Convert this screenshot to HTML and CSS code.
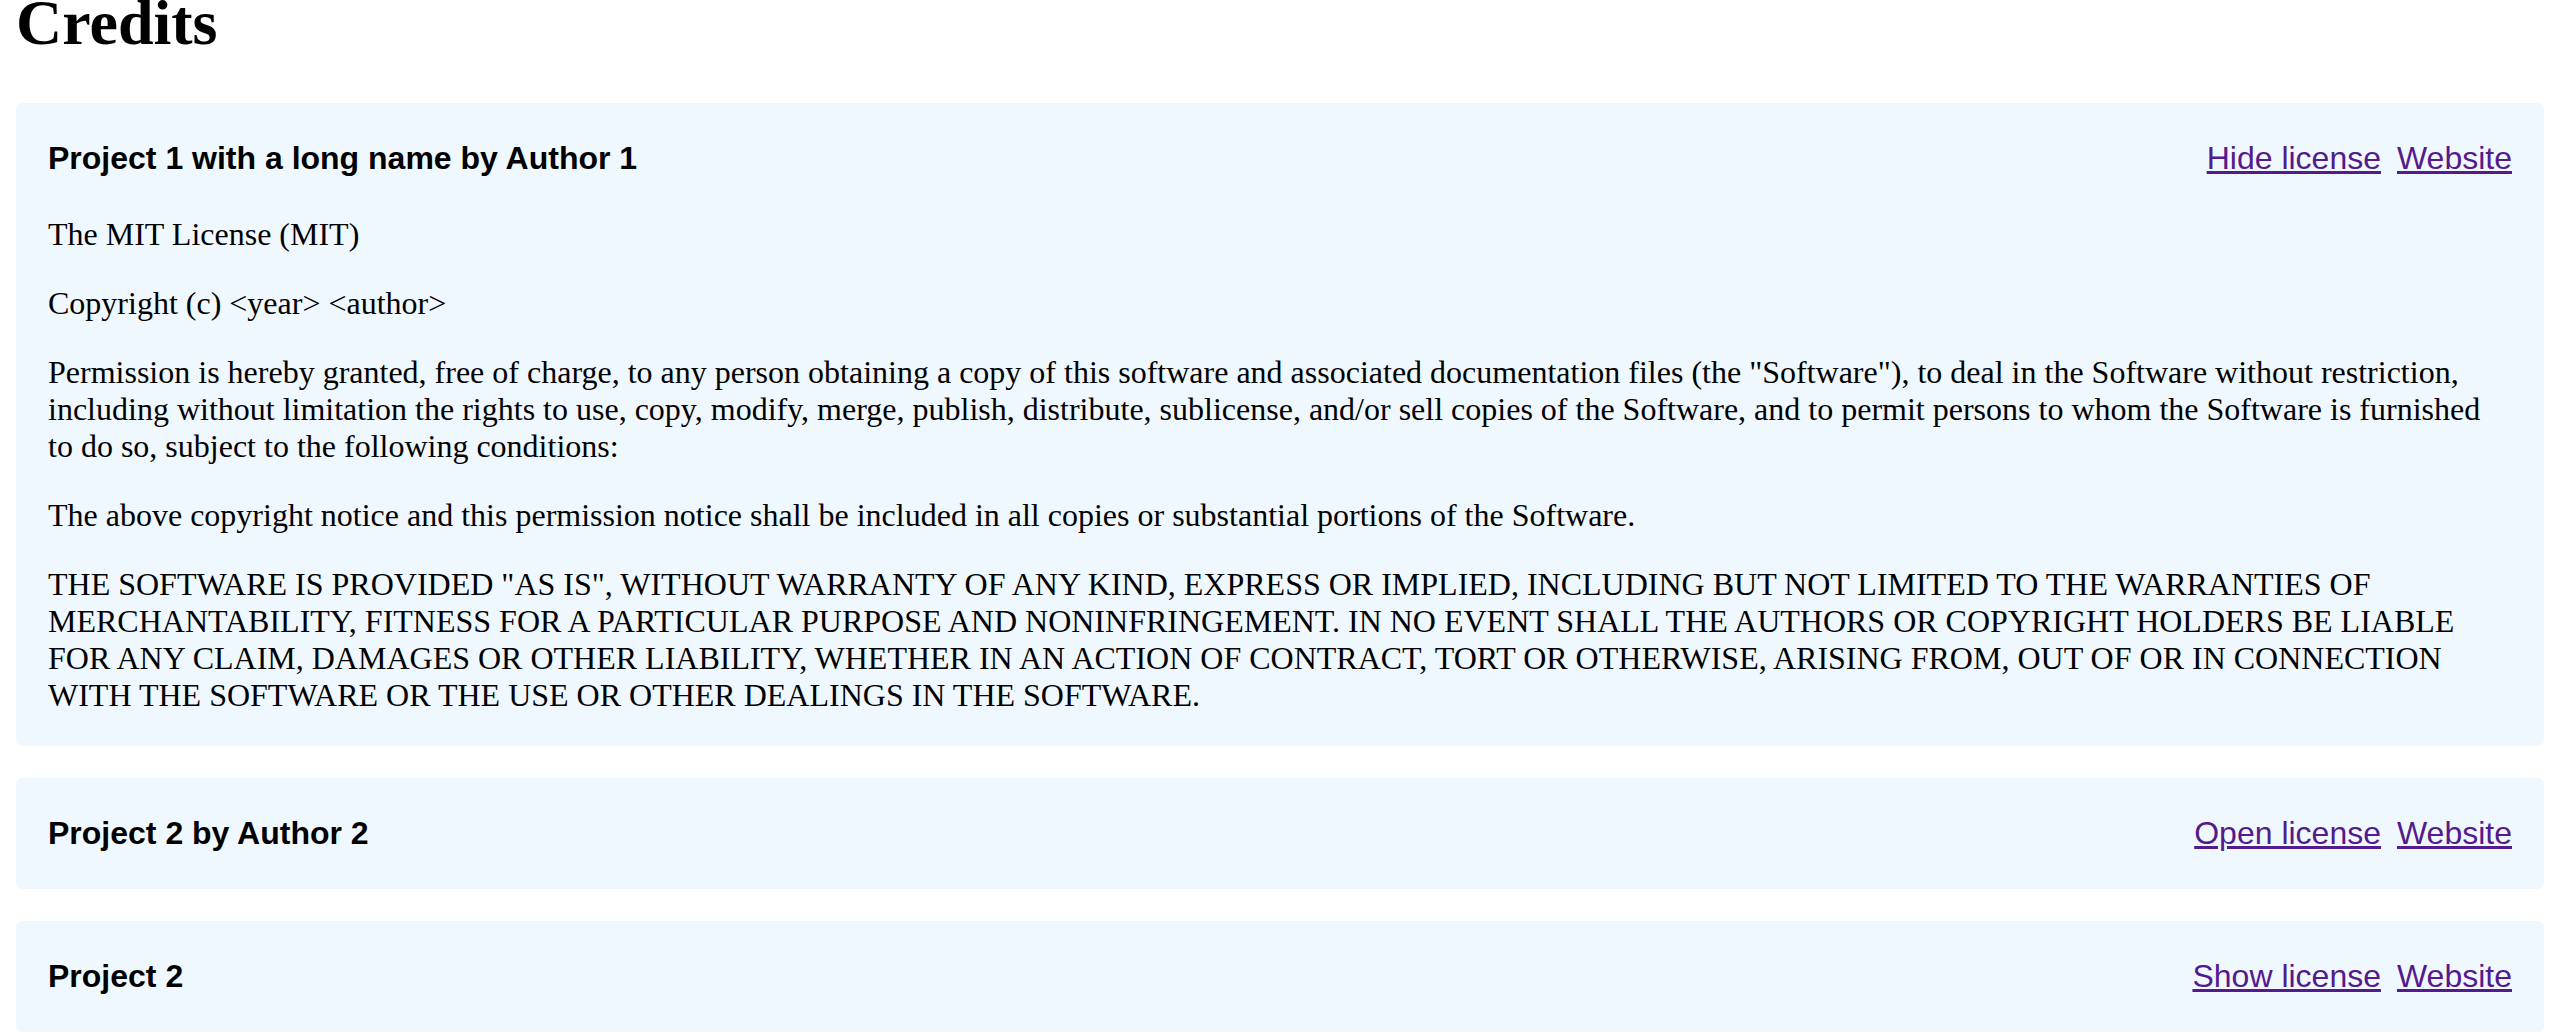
FILE: index.html
```html
<!DOCTYPE html>
<html lang="en">
<head>
<meta charset="utf-8">
<title>Credits</title>
<link rel="stylesheet" href="styles.css">
</head>
<body>
<h1 class="title">Credits</h1>
<div class="list">
  <section class="card">
    <div class="card-head">
      <span class="name">Project 1 with a long name by Author 1</span>
      <span class="links"><a class="link" href="#">Hide license</a><a class="link" href="#">Website</a></span>
    </div>
    <div class="license">
      <p>The MIT License (MIT)</p>
      <p>Copyright (c) &lt;year&gt; &lt;author&gt;</p>
      <p>Permission is hereby granted, free of charge, to any person obtaining a copy of this software and associated documentation files (the "Software"), to deal in the Software without restriction, including without limitation the rights to use, copy, modify, merge, publish, distribute, sublicense, and/or sell copies of the Software, and to permit persons to whom the Software is furnished to do so, subject to the following conditions:</p>
      <p>The above copyright notice and this permission notice shall be included in all copies or substantial portions of the Software.</p>
      <p>THE SOFTWARE IS PROVIDED "AS IS", WITHOUT WARRANTY OF ANY KIND, EXPRESS OR IMPLIED, INCLUDING BUT NOT LIMITED TO THE WARRANTIES OF MERCHANTABILITY, FITNESS FOR A PARTICULAR PURPOSE AND NONINFRINGEMENT. IN NO EVENT SHALL THE AUTHORS OR COPYRIGHT HOLDERS BE LIABLE FOR ANY CLAIM, DAMAGES OR OTHER LIABILITY, WHETHER IN AN ACTION OF CONTRACT, TORT OR OTHERWISE, ARISING FROM, OUT OF OR IN CONNECTION WITH THE SOFTWARE OR THE USE OR OTHER DEALINGS IN THE SOFTWARE.</p>
    </div>
  </section>
  <section class="card">
    <div class="card-head">
      <span class="name">Project 2 by Author 2</span>
      <span class="links"><a class="link" href="#">Open license</a><a class="link" href="#">Website</a></span>
    </div>
  </section>
  <section class="card">
    <div class="card-head">
      <span class="name">Project 2</span>
      <span class="links"><a class="link" href="#">Show license</a><a class="link" href="#">Website</a></span>
    </div>
  </section>
</div>
</body>
</html>
```
FILE: styles.css
```css
html, body {
  overflow: hidden;
}
body {
  margin: 0 16px;
  font-family: "Liberation Serif", "Times New Roman", serif;
  font-size: 32px;
  color: #000;
  background: #fff;
}
.title {
  font-size: 64px;
  font-weight: bold;
  line-height: 46px;
  margin: 0 0 57px;
}
.list {
  display: flex;
  flex-direction: column;
  gap: 32px;
}
.card {
  background: #f0f8ff;
  border-radius: 6px;
  padding: 32px;
}
.card-head {
  display: flex;
  justify-content: space-between;
  align-items: center;
  height: 47px;
  font-family: "Liberation Sans", Arial, sans-serif;
}
.name {
  font-weight: bold;
}
.links {
  display: flex;
  gap: 16px;
}
.link {
  color: #551a8b;
  text-decoration: underline;
}
.license {
  margin-top: 34px;
}
.license p {
  margin: 0 0 32px;
}
.license p:last-child {
  margin-bottom: 0;
}
```
